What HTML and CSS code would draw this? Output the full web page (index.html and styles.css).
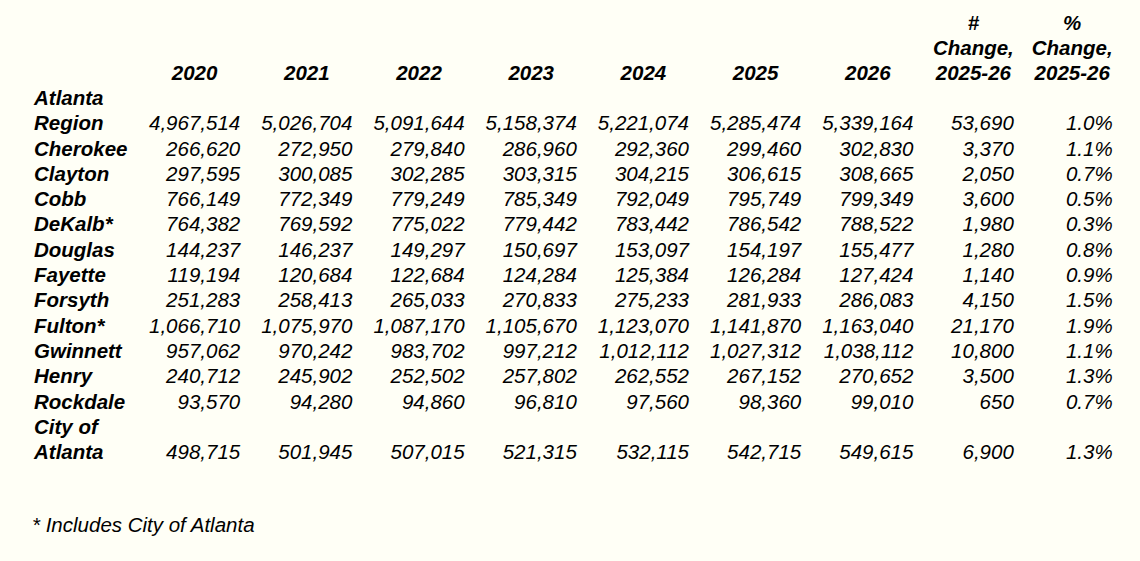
FILE: index.html
```html
<!DOCTYPE html>
<html>
<head>
<meta charset="utf-8">
<link rel="stylesheet" href="styles.css">
</head>
<body>
<div class="page">
<table class="pop">
<thead>
<tr>
<th class="label"></th>
<th>2020</th><th>2021</th><th>2022</th><th>2023</th><th>2024</th><th>2025</th><th>2026</th>
<th class="chg">#<br>Change,<br>2025-26</th>
<th class="chg">%<br>Change,<br>2025-26</th>
</tr>
</thead>
<tbody>
<tr><th class="label">Atlanta Region</th><td>4,967,514</td><td>5,026,704</td><td>5,091,644</td><td>5,158,374</td><td>5,221,074</td><td>5,285,474</td><td>5,339,164</td><td class="chg">53,690</td><td class="chg">1.0%</td></tr>
<tr><th class="label">Cherokee</th><td>266,620</td><td>272,950</td><td>279,840</td><td>286,960</td><td>292,360</td><td>299,460</td><td>302,830</td><td class="chg">3,370</td><td class="chg">1.1%</td></tr>
<tr><th class="label">Clayton</th><td>297,595</td><td>300,085</td><td>302,285</td><td>303,315</td><td>304,215</td><td>306,615</td><td>308,665</td><td class="chg">2,050</td><td class="chg">0.7%</td></tr>
<tr><th class="label">Cobb</th><td>766,149</td><td>772,349</td><td>779,249</td><td>785,349</td><td>792,049</td><td>795,749</td><td>799,349</td><td class="chg">3,600</td><td class="chg">0.5%</td></tr>
<tr><th class="label">DeKalb*</th><td>764,382</td><td>769,592</td><td>775,022</td><td>779,442</td><td>783,442</td><td>786,542</td><td>788,522</td><td class="chg">1,980</td><td class="chg">0.3%</td></tr>
<tr><th class="label">Douglas</th><td>144,237</td><td>146,237</td><td>149,297</td><td>150,697</td><td>153,097</td><td>154,197</td><td>155,477</td><td class="chg">1,280</td><td class="chg">0.8%</td></tr>
<tr><th class="label">Fayette</th><td>119,194</td><td>120,684</td><td>122,684</td><td>124,284</td><td>125,384</td><td>126,284</td><td>127,424</td><td class="chg">1,140</td><td class="chg">0.9%</td></tr>
<tr><th class="label">Forsyth</th><td>251,283</td><td>258,413</td><td>265,033</td><td>270,833</td><td>275,233</td><td>281,933</td><td>286,083</td><td class="chg">4,150</td><td class="chg">1.5%</td></tr>
<tr><th class="label">Fulton*</th><td>1,066,710</td><td>1,075,970</td><td>1,087,170</td><td>1,105,670</td><td>1,123,070</td><td>1,141,870</td><td>1,163,040</td><td class="chg">21,170</td><td class="chg">1.9%</td></tr>
<tr><th class="label">Gwinnett</th><td>957,062</td><td>970,242</td><td>983,702</td><td>997,212</td><td>1,012,112</td><td>1,027,312</td><td>1,038,112</td><td class="chg">10,800</td><td class="chg">1.1%</td></tr>
<tr><th class="label">Henry</th><td>240,712</td><td>245,902</td><td>252,502</td><td>257,802</td><td>262,552</td><td>267,152</td><td>270,652</td><td class="chg">3,500</td><td class="chg">1.3%</td></tr>
<tr><th class="label">Rockdale</th><td>93,570</td><td>94,280</td><td>94,860</td><td>96,810</td><td>97,560</td><td>98,360</td><td>99,010</td><td class="chg">650</td><td class="chg">0.7%</td></tr>
<tr><th class="label">City of Atlanta</th><td>498,715</td><td>501,945</td><td>507,015</td><td>521,315</td><td>532,115</td><td>542,715</td><td>549,615</td><td class="chg">6,900</td><td class="chg">1.3%</td></tr>
</tbody>
</table>
<p class="note">* Includes City of Atlanta</p>
</div>
</body>
</html>
```

FILE: styles.css
```css
html, body {
  margin: 0;
  padding: 0;
  background: #fffff6;
}
.page {
  padding: 10px 0 0 23.5px;
  font-family: "Liberation Sans", Arial, sans-serif;
  font-size: 20.5px;
  font-style: italic;
  color: #000;
}
.pop {
  border-collapse: collapse;
  border-spacing: 0;
}
.pop th, .pop td {
  padding: 0 10.5px;
  line-height: 25.3px;
  vertical-align: bottom;
  white-space: nowrap;
}
.pop th {
  font-weight: bold;
  text-align: center;
}
.pop td {
  font-weight: normal;
  text-align: right;
}
.pop thead th {
  line-height: 25px;
}
.pop .chg {
  padding: 0 9px;
}
.pop th.label {
  text-align: left;
  white-space: normal;
  width: 94px;
}
.note {
  margin: 48px 0 0 8.5px;
  line-height: 25px;
}
```
